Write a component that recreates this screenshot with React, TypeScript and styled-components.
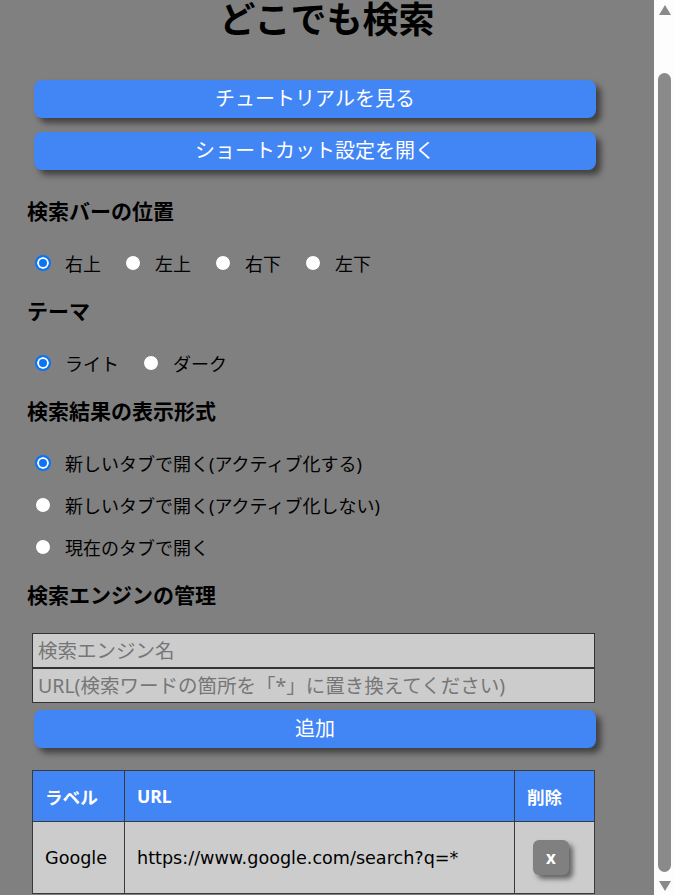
import {FC} from "react"
import styled, {createGlobalStyle} from "styled-components"

const GlobalStyle = createGlobalStyle`
  html, body {
    margin: 0;
    padding: 0;
    background: #808080;
    overflow: hidden;
  }
  body {
    font-family: "Noto Sans", "Noto Sans CJK JP", sans-serif;
    color: #000;
  }
`

const positions = ["右上", "左上", "右下", "左下"]
const themes = ["ライト", "ダーク"]
const openModes = [
  "新しいタブで開く(アクティブ化する)",
  "新しいタブで開く(アクティブ化しない)",
  "現在のタブで開く",
]

const App: FC = () => {
  return (
    <Page>
      <GlobalStyle/>
      <Title>どこでも検索</Title>

      <MainButton>チュートリアルを見る</MainButton>
      <MainButton $gap={14}>ショートカット設定を開く</MainButton>

      <SectionTitle $gap={27}>検索バーの位置</SectionTitle>
      <RadioRow>
        {positions.map((p, i) => (
          <RadioItem key={p}>
            <Radio type="radio" name="position" defaultChecked={i === 0}/>
            <span>{p}</span>
          </RadioItem>
        ))}
      </RadioRow>

      <SectionTitle>テーマ</SectionTitle>
      <RadioRow>
        {themes.map((t, i) => (
          <RadioItem key={t}>
            <Radio type="radio" name="theme" defaultChecked={i === 0}/>
            <span>{t}</span>
          </RadioItem>
        ))}
      </RadioRow>

      <SectionTitle>検索結果の表示形式</SectionTitle>
      <RadioColumn>
        {openModes.map((m, i) => (
          <RadioItem key={m}>
            <Radio type="radio" name="open" defaultChecked={i === 0}/>
            <span>{m}</span>
          </RadioItem>
        ))}
      </RadioColumn>

      <SectionTitle>検索エンジンの管理</SectionTitle>
      <Inputs>
        <TextInput placeholder="検索エンジン名"/>
        <TextInput placeholder="URL(検索ワードの箇所を「*」に置き換えてください)"/>
      </Inputs>
      <MainButton $gap={7}>追加</MainButton>

      <EngineTable>
        <colgroup>
          <col style={{width: 92}}/>
          <col style={{width: 390}}/>
          <col style={{width: 80}}/>
        </colgroup>
        <thead>
          <tr>
            <Th>ラベル</Th>
            <Th>URL</Th>
            <Th>削除</Th>
          </tr>
        </thead>
        <tbody>
          <tr>
            <Td>Google</Td>
            <Td>https://www.google.com/search?q=*</Td>
            <DeleteCell>
              <DeleteButton>x</DeleteButton>
            </DeleteCell>
          </tr>
        </tbody>
      </EngineTable>

      <ScrollBar aria-hidden>
        <ArrowUp/>
        <Thumb/>
        <ArrowDown/>
      </ScrollBar>
    </Page>
  )
}

const Page = styled.div`
  display: flex;
  flex-direction: column;
  padding: 0 0 12px 27px;
  width: 569px;
`

const Title = styled.h1`
  margin: 0 0 0 -27px;
  width: 654px;
  text-align: center;
  font-size: 36px;
  line-height: 40px;
  font-weight: 700;
`

const MainButton = styled.button<{$gap?: number}>`
  margin: ${p => p.$gap ?? 40}px 0 0 7px;
  height: 38px;
  width: calc(100% - 7px);
  border: none;
  border-radius: 8px;
  background: #4285f4;
  color: #fff;
  font-family: inherit;
  font-size: 20px;
  line-height: 38px;
  padding: 0;
  box-shadow: 5px 5px 6px rgba(0, 0, 0, 0.5);
  cursor: pointer;
`

const SectionTitle = styled.h3<{$gap?: number}>`
  margin: ${p => p.$gap ?? 19}px 0 0;
  font-size: 21px;
  line-height: 28px;
  font-weight: 700;
`

const RadioRow = styled.div`
  display: flex;
  gap: 24px;
  margin-top: 23px;
  padding-left: 8px;
`

const RadioColumn = styled.div`
  display: flex;
  flex-direction: column;
  gap: 12px;
  margin-top: 23px;
  padding-left: 8px;
`

const RadioItem = styled.label`
  display: flex;
  align-items: center;
  gap: 14px;
  height: 30px;
  font-size: 18px;
`

const Radio = styled.input`
  appearance: none;
  flex: none;
  width: 16px;
  height: 16px;
  margin: 0;
  border-radius: 50%;
  background: #fff;
  border: 1px solid #7a7a7a;

  &:checked{
    border: 2px solid #0a74f5;
    background: #0a74f5;
    box-shadow: inset 0 0 0 2px #fff;
  }
`

const Inputs = styled.div`
  display: flex;
  flex-direction: column;
  margin: 24px 0 0 5px;
  width: 563px;
`

const TextInput = styled.input`
  box-sizing: border-box;
  height: 35px;
  width: 100%;
  margin: 0;
  padding: 0 5px;
  border: 1px solid #333;
  background: #cccccc;
  font-family: inherit;
  font-size: 19.5px;
  color: #000;
  outline: none;

  &::placeholder{
    color: #767676;
  }
`

const EngineTable = styled.table`
  margin: 22px 0 0 5px;
  width: 562px;
  border-collapse: collapse;
  table-layout: fixed;
  font-size: 17.6px;
`

const Th = styled.th`
  height: 50px;
  padding: 0 12px;
  border: 1px solid #3a3a3a;
  background: #4285f4;
  color: #fff;
  text-align: left;
  font-weight: 700;
`

const Td = styled.td`
  height: 71px;
  padding: 0 12px;
  border: 1px solid #3a3a3a;
  background: #cccccc;
  white-space: nowrap;
  font-family: "DejaVu Sans", "Noto Sans CJK JP", sans-serif;
  font-size: 17.6px;
`

const DeleteCell = styled(Td)`
  padding: 0 0 0 18px;
`

const DeleteButton = styled.button`
  width: 36px;
  height: 35px;
  border: none;
  border-radius: 6px;
  background: #808080;
  color: #fff;
  font-family: "Noto Sans", sans-serif;
  font-size: 17px;
  font-weight: 700;
  padding: 0;
  box-shadow: 4px 4px 5px rgba(0, 0, 0, 0.5);
`

// browser scrollbar as it shows in the screenshot (page scrolled slightly down)
const ScrollBar = styled.div`
  position: fixed;
  top: 0;
  right: 0;
  width: 21px;
  height: 100vh;
  display: flex;
  flex-direction: column;
  align-items: center;
  background: #fdfdfd;
`

const ArrowUp = styled.div`
  margin-top: 5px;
  width: 0;
  height: 0;
  border-left: 6.5px solid transparent;
  border-right: 6.5px solid transparent;
  border-bottom: 10px solid #8a8a8a;
`

const Thumb = styled.div`
  margin-top: 58px;
  width: 13px;
  flex: 1;
  border-radius: 7px;
  background: #8a8a8a;
`

const ArrowDown = styled.div`
  margin: 9px 0 4px;
  width: 0;
  height: 0;
  border-left: 6.5px solid transparent;
  border-right: 6.5px solid transparent;
  border-top: 10px solid #8a8a8a;
`

export default App
